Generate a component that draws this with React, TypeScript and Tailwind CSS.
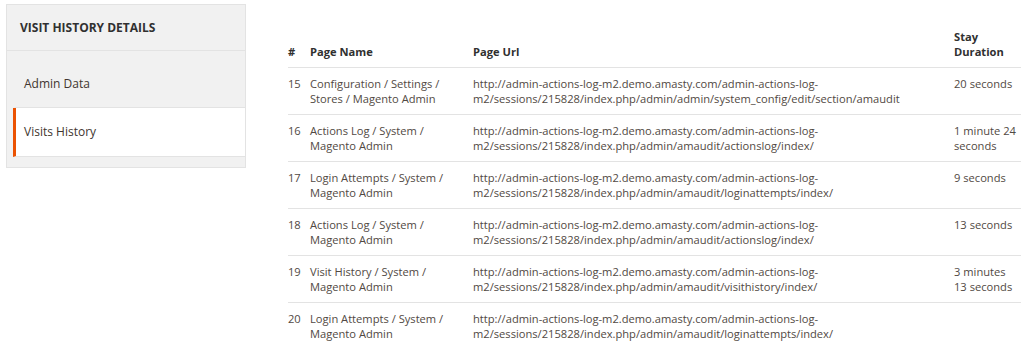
import React from 'react';

const BASE = 'http://admin-actions-log-m2.demo.amasty.com/admin-actions-log-';

const visits = [
  { id: 15, name: ['Configuration / Settings /', 'Stores / Magento Admin'], path: 'm2/sessions/215828/index.php/admin/admin/system_config/edit/section/amaudit', stay: ['20 seconds'] },
  { id: 16, name: ['Actions Log / System /', 'Magento Admin'], path: 'm2/sessions/215828/index.php/admin/amaudit/actionslog/index/', stay: ['1 minute 24', 'seconds'] },
  { id: 17, name: ['Login Attempts / System /', 'Magento Admin'], path: 'm2/sessions/215828/index.php/admin/amaudit/loginattempts/index/', stay: ['9 seconds'] },
  { id: 18, name: ['Actions Log / System /', 'Magento Admin'], path: 'm2/sessions/215828/index.php/admin/amaudit/actionslog/index/', stay: ['13 seconds'] },
  { id: 19, name: ['Visit History / System /', 'Magento Admin'], path: 'm2/sessions/215828/index.php/admin/amaudit/visithistory/index/', stay: ['3 minutes', '13 seconds'] },
  { id: 20, name: ['Login Attempts / System /', 'Magento Admin'], path: 'm2/sessions/215828/index.php/admin/amaudit/loginattempts/index/', stay: [] as string[] },
];

function Lines({ lines }: { lines: string[] }) {
  return (
    <>
      {lines.map((l) => (
        <span key={l} className="block whitespace-nowrap">{l}</span>
      ))}
    </>
  );
}

export default function App() {
  return (
    <div className="flex w-[1024px] h-[349px] bg-white overflow-hidden text-[#303030] font-['Open_Sans',sans-serif]">
      {/* Sidebar tabs */}
      <div className="ml-[6px] mt-[4px] self-start w-[240px] border border-[#e3e3e3] bg-[#f1f1f1] pb-[10px]">
        <div className="h-[46px] flex items-center px-[13px] border-b border-[#e3e3e3] text-[12px] font-bold uppercase">
          Visit History Details
        </div>
        <div className="pt-[9px] ml-[6px]">
          <div className="border-l-[3px] border-l-transparent border-b border-b-[#e3e3e3] pl-[8px] pt-[16px] pb-[16px] text-[12px] leading-[15px] text-[#41362f]">
            Admin Data
          </div>
          <div className="border-l-[3px] border-l-[#eb5202] border-b border-b-[#e3e3e3] bg-white pl-[8px] pt-[16px] pb-[17px] text-[12px] leading-[15px] text-[#41362f]">
            Visits History
          </div>
        </div>
      </div>

      {/* Visits table */}
      <div className="ml-[42px] mt-[21px] w-[733px]">
        <table className="w-full table-fixed border-collapse text-[11.15px] leading-[15px]">
          <colgroup>
            <col className="w-[22px]" />
            <col className="w-[163px]" />
            <col className="w-[481px]" />
            <col className="w-[67px]" />
          </colgroup>
          <thead>
            <tr className="border-b border-[#e3e3e3] text-[#303030]">
              <th className="text-left align-bottom py-[8px] font-bold">#</th>
              <th className="text-left align-bottom py-[8px] font-bold">Page Name</th>
              <th className="text-left align-bottom py-[8px] font-bold">Page Url</th>
              <th className="text-left align-bottom py-[8px] font-bold">
                <Lines lines={['Stay', 'Duration']} />
              </th>
            </tr>
          </thead>
          <tbody className="text-[#514943]">
            {visits.map((v, i) => (
              <tr key={v.id} className={i < visits.length - 1 ? 'border-b border-[#e3e3e3]' : ''}>
                <td className="align-top py-[8px]">{v.id}</td>
                <td className="align-top py-[8px]"><Lines lines={v.name} /></td>
                <td className="align-top py-[8px]"><Lines lines={[BASE, v.path]} /></td>
                <td className="align-top py-[8px]"><Lines lines={v.stay} /></td>
              </tr>
            ))}
          </tbody>
        </table>
      </div>
    </div>
  );
}
